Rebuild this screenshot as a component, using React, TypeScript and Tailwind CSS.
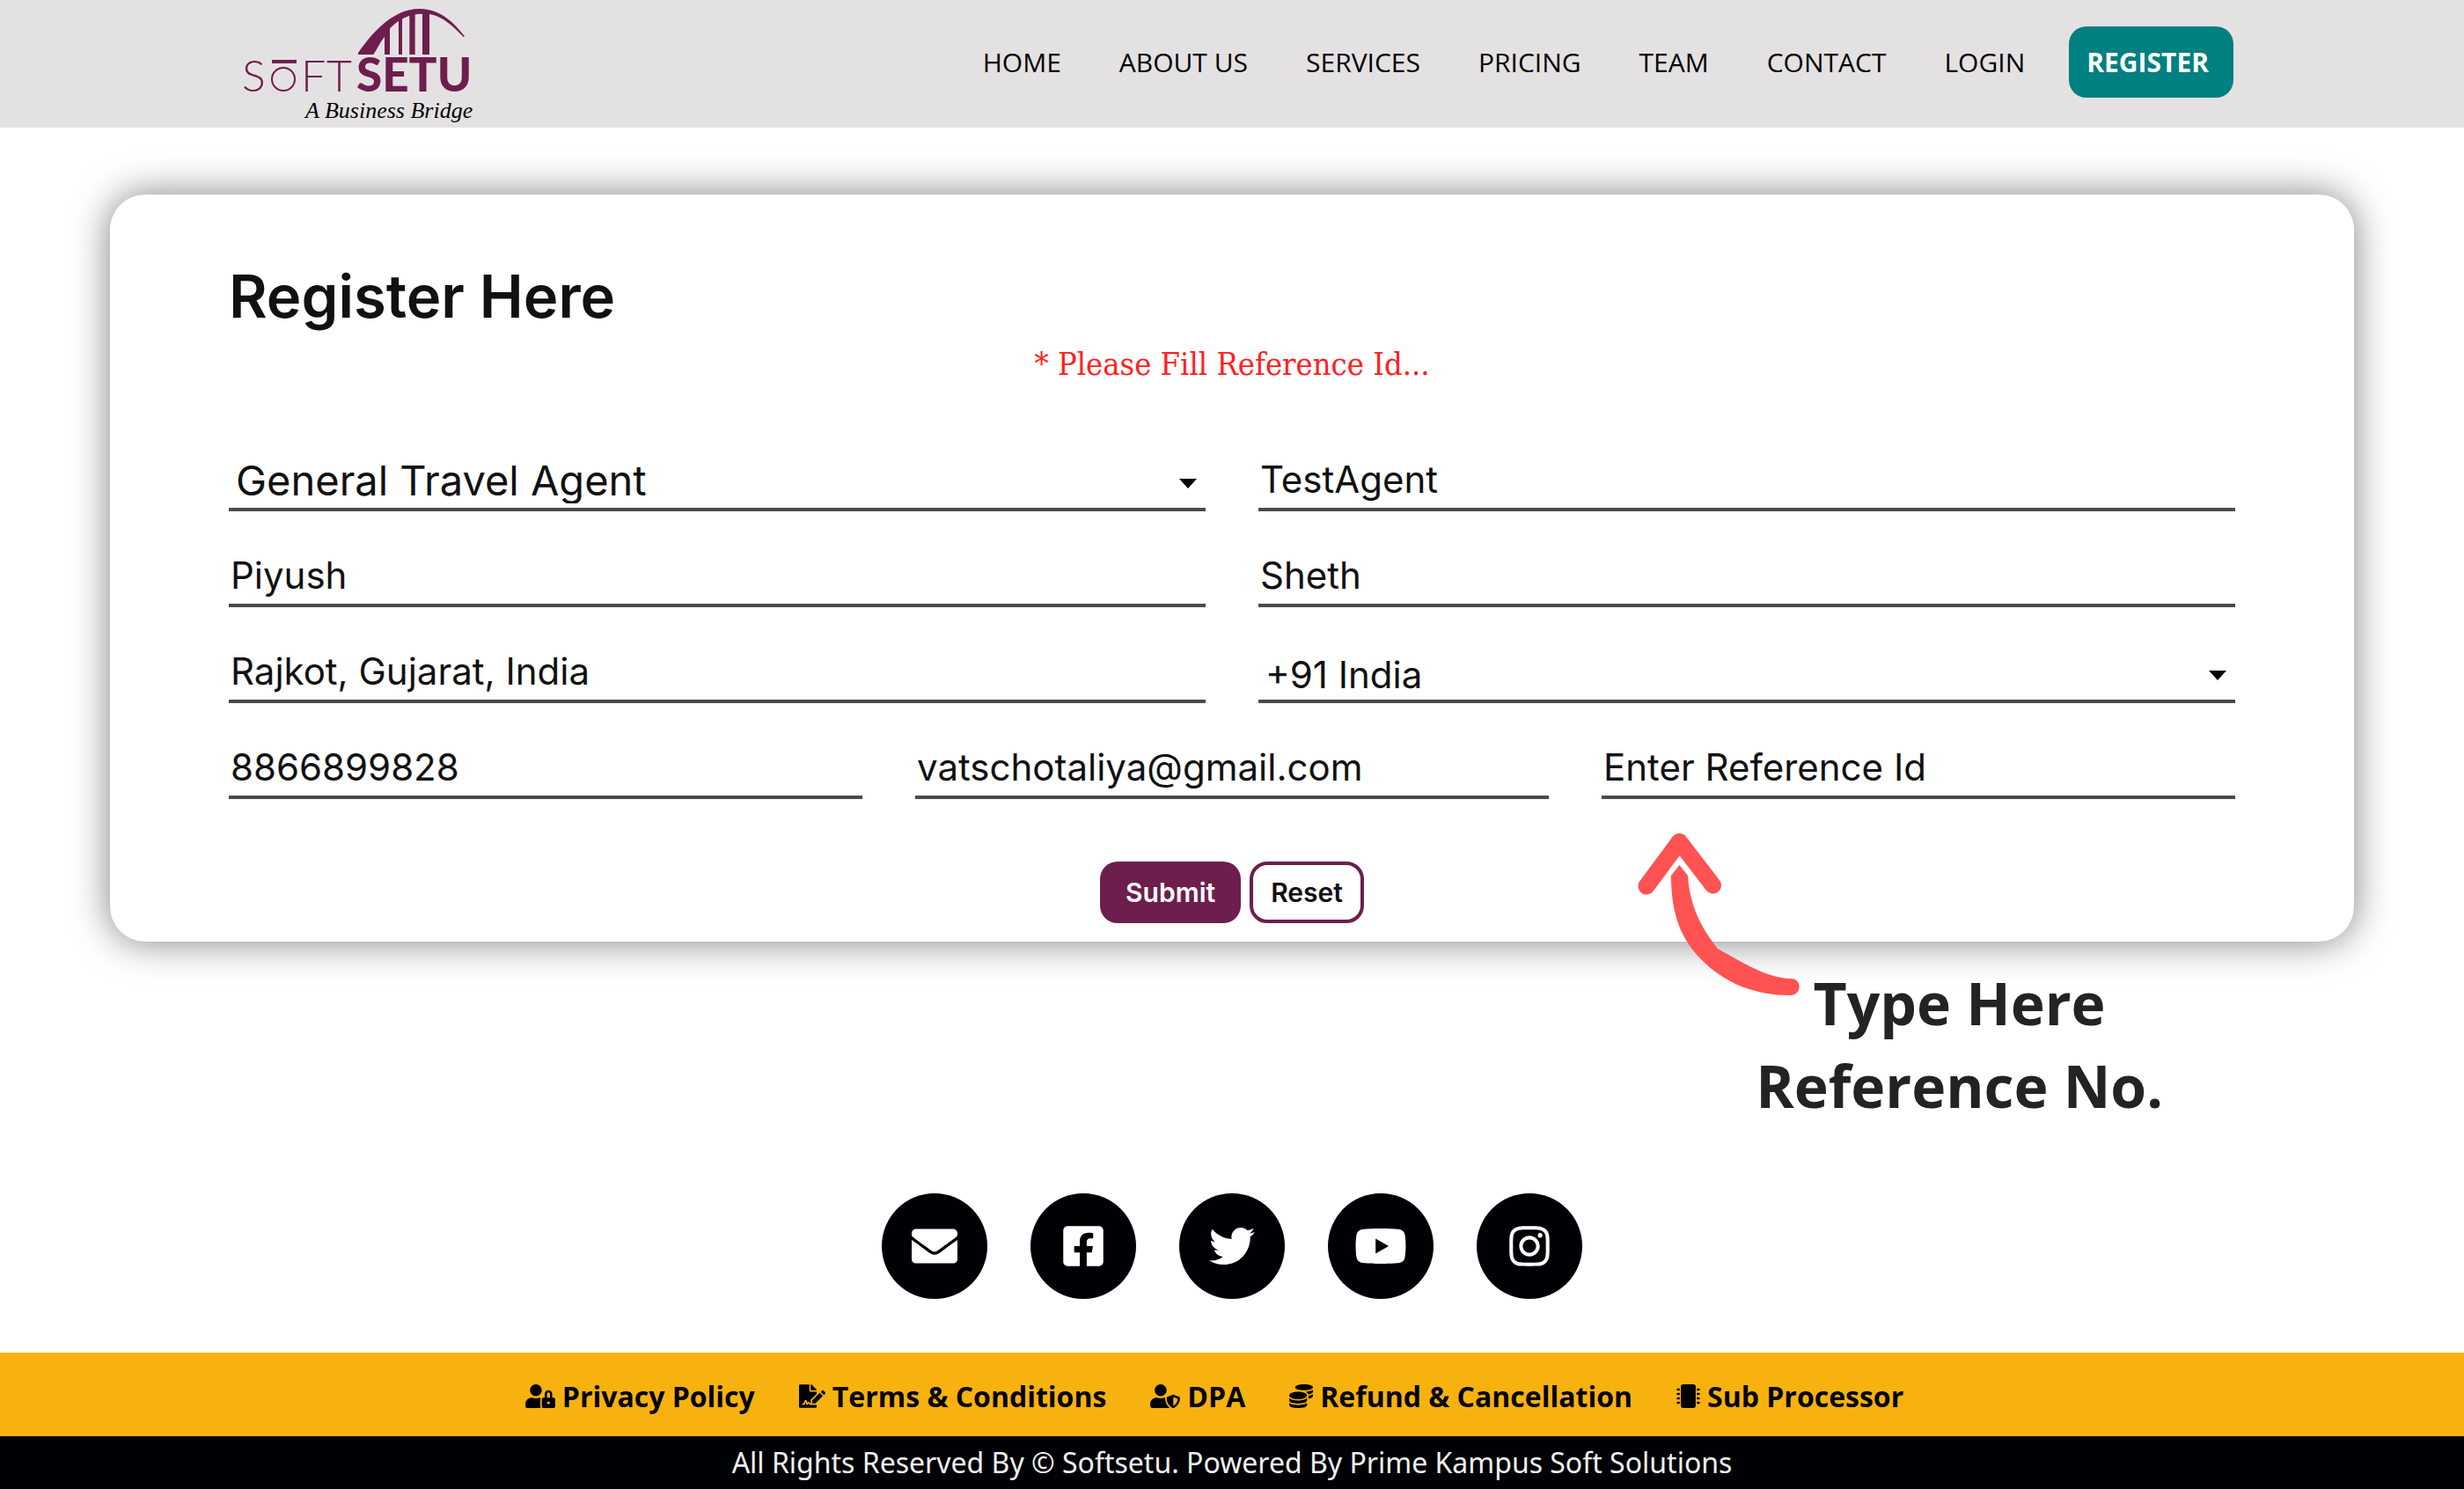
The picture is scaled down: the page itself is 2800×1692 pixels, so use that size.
import type { ReactNode } from 'react';
import type { IconType } from 'react-icons';
import {
  FaCoins,
  FaEnvelope,
  FaFacebookSquare,
  FaFileSignature,
  FaInstagram,
  FaMicrochip,
  FaTwitter,
  FaUserLock,
  FaUserShield,
  FaYoutube,
} from 'react-icons/fa';

const NAV_LINKS = ['HOME', 'ABOUT US', 'SERVICES', 'PRICING', 'TEAM', 'CONTACT', 'LOGIN'];

const SOCIALS: { label: string; Icon: IconType; size: string }[] = [
  { label: 'Email', Icon: FaEnvelope, size: 'size-[52px]' },
  { label: 'Facebook', Icon: FaFacebookSquare, size: 'size-[52px]' },
  { label: 'Twitter', Icon: FaTwitter, size: 'size-[52px]' },
  { label: 'YouTube', Icon: FaYoutube, size: 'size-[60px]' },
  { label: 'Instagram', Icon: FaInstagram, size: 'size-[52px]' },
];

const POLICIES: { label: string; Icon: IconType; size: string }[] = [
  { label: 'Privacy Policy', Icon: FaUserLock, size: 'h-[27px] w-[34px]' },
  { label: 'Terms & Conditions', Icon: FaFileSignature, size: 'h-[27px] w-[30px]' },
  { label: 'DPA', Icon: FaUserShield, size: 'h-[27px] w-[34px]' },
  { label: 'Refund & Cancellation', Icon: FaCoins, size: 'size-[27px]' },
  { label: 'Sub Processor', Icon: FaMicrochip, size: 'size-[27px]' },
];

function Logo() {
  return (
    <svg viewBox="267 0 275 145" className="h-[145px] w-[275px]" role="img" aria-label="Softsetu, A Business Bridge">
      <g fill="#6d1e4c">
        <g transform="translate(250 0) scale(0.33333)">
          <path d="M471 186 V180 C520 110 590 30 680 30 C750 30 795 75 834 124 L830 126 C795 90 755 52 712 48 C650 42 610 65 579 97 V186 H561 V125 C545 145 540 160 523 186 Z" />
          <path d="M609 70 L621 62 V186 H609 Z" />
          <path d="M646 50 L665 46 V186 H646 Z" />
          <path d="M690 44 L714 46 V186 H690 Z" />
        </g>
        <rect x="309" y="68" width="28" height="4" />
        <circle cx="322" cy="90" r="13" fill="none" stroke="#6d1e4c" strokeWidth="2" />
        <g className="font-['Lato'] text-[50px] font-light">
          <text x="275" y="104">S</text>
          <text x="342" y="104">F</text>
          <text x="371" y="104">T</text>
        </g>
        <text x="405" y="104" className="font-['Lato'] text-[53px] font-black">SETU</text>
      </g>
      <text x="347" y="134" className="fill-black font-['Liberation_Serif'] text-[26px] italic">A Business Bridge</text>
    </svg>
  );
}

const FIELD = 'block h-16 w-full border-b-4 border-[#4a4a4a] bg-transparent text-[#111111] outline-none';

function TextField({ label, value, placeholder, type = 'text' }: { label: string; value?: string; placeholder?: string; type?: string }) {
  return (
    <input
      type={type}
      aria-label={label}
      defaultValue={value}
      placeholder={placeholder}
      className={`${FIELD} pb-1.5 pl-0.5 text-[42px] placeholder:text-[#111111] placeholder:opacity-100`}
    />
  );
}

function SelectField({ label, value, large = false }: { label: string; value: string; large?: boolean }) {
  return (
    <div className="relative">
      <select
        aria-label={label}
        className={`${FIELD} appearance-none pl-2 ${large ? 'pb-0.5 text-[47px] leading-[52px]' : 'pb-2 text-[42px]'}`}
      >
        <option>{value}</option>
      </select>
      <svg viewBox="0 0 20 11" className="pointer-events-none absolute inset-y-0 right-2.5 my-auto h-[11px] w-5 fill-black" aria-hidden="true">
        <path d="M0 0 H20 L10 11 Z" />
      </svg>
    </div>
  );
}

function Row({ children, cols = 2 }: { children: ReactNode; cols?: 2 | 3 }) {
  return <div className={cols === 2 ? 'grid grid-cols-2 gap-[60px]' : 'grid grid-cols-3 gap-[60px]'}>{children}</div>;
}

function PointerArrow() {
  return (
    <svg viewBox="0 0 188 188" className="absolute -top-[147px] -left-[135px] size-[188px]" aria-hidden="true">
      <path d="M11 62 L48.4 11.5 L86.5 61" fill="none" stroke="#ff5252" strokeWidth="19" strokeLinecap="round" strokeLinejoin="round" />
      <path d="M48.4 38 L39 50 C39 92 49 120 72 144 C100 173 135 186 174 186 C188 186 188 167 175 167 C150 167 122 150 92 133 C75 112 60 86 58 50 Z" fill="#ff5252" />
    </svg>
  );
}

export default function App() {
  return (
    <div className="bg-white font-['Open_Sans',sans-serif]">
      <header className="flex h-[145px] items-center justify-between bg-[#e4e1e3] pr-[262px] pl-[267px]">
        <a href="#home">
          <Logo />
        </a>
        <nav className="flex items-center gap-[34px] pb-1 text-[30px] leading-[42px] text-black">
          {NAV_LINKS.map((label) => (
            <a key={label} href="#" className="px-4">
              {label}
            </a>
          ))}
          <a href="#register" className="flex h-[81px] items-center rounded-[20px] bg-[#008080] pr-7 pl-5 font-bold text-white">
            REGISTER
          </a>
        </nav>
      </header>

      <main>
        <form
          className="mx-[125px] mt-[76px] rounded-[40px] bg-white px-[135px] pt-[76px] pb-[21px] font-['Inter',sans-serif] shadow-[0_0_44px_rgba(0,0,0,0.5)]"
          onSubmit={(e) => e.preventDefault()}
        >
          <h1 className="text-[67px] leading-[80px] font-semibold text-[#111111]">Register Here</h1>
          <p className="mt-[11px] text-center font-['DejaVu_Serif_Condensed','DejaVu_Serif',serif] text-[36px] leading-[52px] text-[#ff2020]">
            * Please Fill Reference Id...
          </p>

          <div className="mt-[77px] flex flex-col gap-[45px]">
            <Row>
              <SelectField label="Agent type" value="General Travel Agent" large />
              <TextField label="Company name" value="TestAgent" />
            </Row>
            <Row>
              <TextField label="First name" value="Piyush" />
              <TextField label="Last name" value="Sheth" />
            </Row>
            <Row>
              <TextField label="Location" value="Rajkot, Gujarat, India" />
              <SelectField label="Country code" value="+91 India" />
            </Row>
            <Row cols={3}>
              <TextField label="Phone number" type="tel" value="8866899828" />
              <TextField label="Email" type="email" value="vatschotaliya@gmail.com" />
              <TextField label="Reference Id" placeholder="Enter Reference Id" />
            </Row>
          </div>

          <div className="mt-[71px] flex justify-center gap-2.5 text-[30px] font-semibold">
            <button type="submit" className="h-[70px] rounded-[20px] bg-[#6d1e4c] px-[29px] text-white">
              Submit
            </button>
            <button type="reset" className="h-[70px] rounded-[20px] border-4 border-[#6d1e4c] bg-white px-5 text-[#111111]">
              Reset
            </button>
          </div>
        </form>

        <div className="mt-[22px] mr-[342px] flex justify-end">
          <div className="relative text-center text-[66px] leading-[94px] font-bold text-[#232323]">
            <PointerArrow />
            <p>Type Here</p>
            <p>Reference No.</p>
          </div>
        </div>
      </main>

      <footer className="mt-[76px]">
        <ul className="flex justify-center gap-[49px]">
          {SOCIALS.map(({ label, Icon, size }) => (
            <li key={label}>
              <a href="#" aria-label={label} className="flex size-[120px] items-center justify-center rounded-full bg-[#000105] text-white">
                <Icon className={size} />
              </a>
            </li>
          ))}
        </ul>
        <ul className="mt-[61px] flex h-[95px] items-center justify-center gap-[50px] bg-[#f7b20f] pt-1 pr-10 text-[32px] font-bold text-black">
          {POLICIES.map(({ label, Icon, size }) => (
            <li key={label}>
              <a href="#" className="flex items-center gap-2">
                <Icon className={size} />
                {label}
              </a>
            </li>
          ))}
        </ul>
        <p className="bg-[#000105] text-center font-['Noto_Sans',sans-serif] text-[32px] leading-[60px] text-[#f0f0f0]">
          All Rights Reserved By © Softsetu. Powered By Prime Kampus Soft Solutions
        </p>
      </footer>
    </div>
  );
}
